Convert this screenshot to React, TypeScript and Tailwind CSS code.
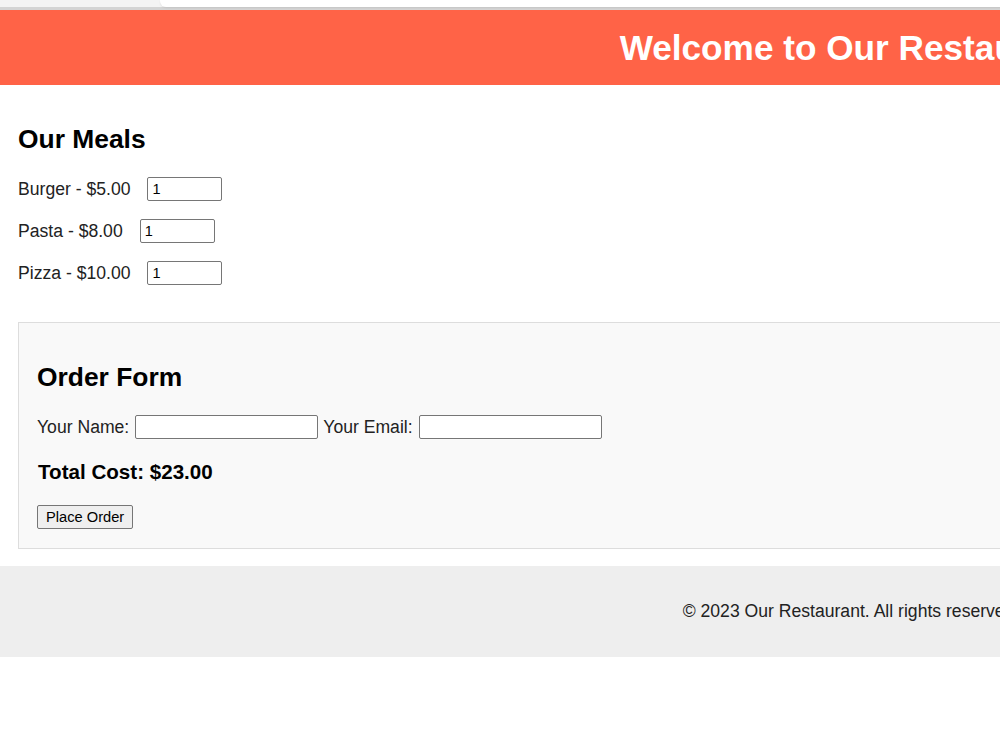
import React from "react";

export default function App() {
  const meals = [
    { name: "Burger", price: "$5.00" },
    { name: "Pasta", price: "$8.00" },
    { name: "Pizza", price: "$10.00" },
  ];
  return (
    <div className="w-screen h-[750px] overflow-hidden bg-white" style={{ fontFamily: '"Liberation Sans", Arial, sans-serif' }}>
      <div className="w-[1702px] text-[#222]">
        <div className="flex h-[7px] bg-[#f4f4f4]">
          <div className="w-[160px]" />
          <div className="flex-1 bg-white rounded-bl-[6px] shadow-[0_1px_2px_rgba(0,0,0,0.08)]" />
        </div>
        <div className="h-[3px] bg-[#d4d4d4]" />
        <header className="h-[75px] bg-[#ff6347] flex items-center justify-center">
          <h1 className="text-[35.2px] font-bold text-white leading-[40px]">Welcome to Our Restaurant</h1>
        </header>
        <main className="px-[18px] pt-[39px]">
          <section>
            <h2 className="text-[26.4px] font-bold text-black leading-[30px]">Our Meals</h2>
            <div className="mt-[23px] flex flex-col gap-[18px]">
              {meals.map((m) => (
                <div key={m.name} className="flex items-center h-[24px] text-[17.6px]">
                  <label className="mr-[17px]">{m.name} - {m.price}</label>
                  <input
                    type="number"
                    defaultValue={1}
                    className="w-[75px] h-[24px] border border-[#767676] rounded-[2px] bg-white px-[4px] text-[14.5px] text-black [appearance:textfield]"
                  />
                </div>
              ))}
            </div>
          </section>
          <section className="mt-[37px] border border-[#dddddd] bg-[#f9f9f9] px-[18px] pt-[39px] pb-[19px]">
            <h2 className="text-[26.4px] font-bold text-black leading-[30px]">Order Form</h2>
            <div className="mt-[23px] flex items-center text-[17.6px] h-[24px]">
              <label>Your Name:</label>
              <input type="text" className="ml-[6px] w-[183px] h-[24px] border border-[#767676] rounded-[2px] bg-white" />
              <label className="ml-[5px]">Your Email:</label>
              <input type="email" className="ml-[6px] w-[183px] h-[24px] border border-[#767676] rounded-[2px] bg-white" />
            </div>
            <div className="mt-[21px] text-[20.6px] font-bold text-black leading-[24px] pl-[1px]">Total Cost: $23.00</div>
            <button className="mt-[21px] h-[24px] px-[8px] text-[14.67px] text-black bg-[#efefef] border border-[#767676] rounded-[2px]">
              Place Order
            </button>
          </section>
        </main>
        <footer className="mt-[17px] h-[91px] bg-[#eeeeee] flex items-center justify-center text-[17.6px]">
          © 2023 Our Restaurant. All rights reserved.
        </footer>
      </div>
    </div>
  );
}
